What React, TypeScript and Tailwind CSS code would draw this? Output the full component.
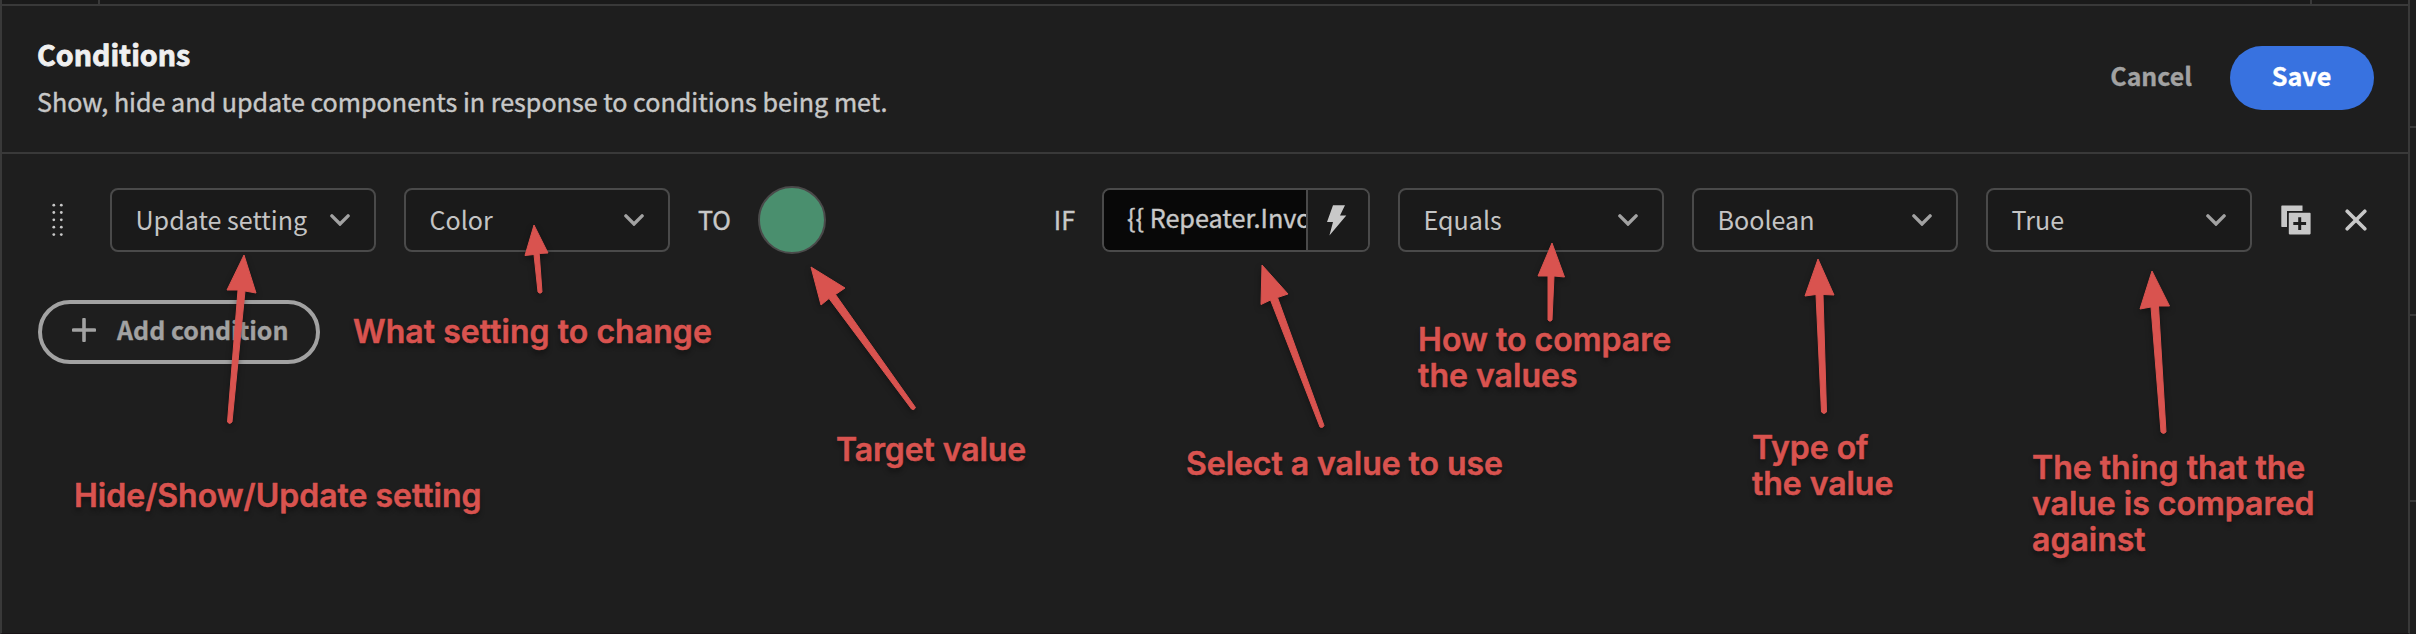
import React from "react";

const Chevron = () => (
  <svg width="20" height="12" viewBox="0 0 20 12" fill="none" className="mb-px shrink-0 text-[#a2a2a2]">
    <path d="M1.9 1.9 10 10 18.1 1.9" stroke="currentColor" strokeWidth="3.4" strokeLinecap="round" strokeLinejoin="miter" />
  </svg>
);

const Select = ({ label }: { label: string }) => (
  <button className="flex h-16 w-[266px] shrink-0 items-center justify-between rounded-lg border-2 border-[#4a4a4a] bg-[#1a1a1a] pr-6 pl-[23.5px]">
    <span className="pb-0.5 text-[25.1px] leading-8 text-[#c4c4c4]">{label}</span>
    <Chevron />
  </button>
);

const DragHandle = () => (
  <svg width="12" height="34" viewBox="0 0 12 34" className="shrink-0 fill-[#c8c8c8]">
    {[2.2, 9.5, 16.8, 24.2, 31.6].map((y) => (
      <g key={y}>
        <circle cx="1.8" cy={y} r="1.4" />
        <circle cx="9.3" cy={y} r="1.4" />
      </g>
    ))}
  </svg>
);

const BindingInput = () => (
  <div className="flex h-16 w-[268px] shrink-0 overflow-hidden rounded-lg border-2 border-[#4a4a4a]">
    <div className="flex w-[202px] items-center overflow-hidden bg-[#080808] pb-1.5 pl-[23px]">
      <span className="text-[25.2px] leading-8 whitespace-nowrap text-[#c8c8c8] [-webkit-text-stroke:0.4px]">
        {"{{ Repeater.Invo"}
      </span>
    </div>
    <div className="flex flex-1 items-center justify-center border-l-2 border-[#4a4a4a] bg-[#1a1a1a]">
      <svg width="20" height="31" viewBox="0 0 20 31" className="mr-[3px] fill-[#c8c8c8]">
        <path d="M6 .3H18L13 10.5H19.3L2.4 30.5 6 17H0Z" />
      </svg>
    </div>
  </div>
);

const DuplicateIcon = () => (
  <svg width="30" height="30" viewBox="0 0 30 30" className="shrink-0 fill-[#c8c8c8]">
    <path d="M1 .5H21.5V6H6V22H1A.8.8 0 0 1 .3 21V1.2A.8.8 0 0 1 1 .5Z" />
    <path
      fillRule="evenodd"
      d="M8.6 7.8H28.8A.8.8 0 0 1 29.6 8.6V28.6A.8.8 0 0 1 28.8 29.4H8.6A.8.8 0 0 1 7.8 28.6V8.6A.8.8 0 0 1 8.6 7.8ZM17.2 12.2V17.1H12.3V20.1H17.2V25H20.2V20.1H25.1V17.1H20.2V12.2Z"
    />
  </svg>
);

const CloseIcon = () => (
  <svg width="22" height="22" viewBox="0 0 22 22" fill="none" className="shrink-0 text-[#c8c8c8]">
    <path d="M2.2 2.2 19.8 19.8M19.8 2.2 2.2 19.8" stroke="currentColor" strokeWidth="3.6" strokeLinecap="round" />
  </svg>
);

const arrows = [
  "M244 255 256 293 245 291 232 422 Q229.500 425 227.500 422 L238 290 227 290Z",
  "M534 225 548 253 539.200 253.500 542 292 Q540 294.500 538 292 L534 254.500 525 255.500Z",
  "M811 267 845 288 835.500 294.500 915.500 407.500 Q914 411 911.500 409 L829 298.500 821 305Z",
  "M1262 265 1288 294 1277.500 297.500 1324 425.500 Q1323 428.500 1320 427 L1270.500 300 1261 304.500Z",
  "M1552 243 1564.500 277 1554 276 1552 320 Q1550 322.500 1548 320 L1548 276 1538 276Z",
  "M1818 259 1834 295 1823 294.500 1826.500 412 Q1824 415 1821.500 412 L1816 294.500 1805 296Z",
  "M2152 271 2169.500 306 2158.500 306 2166 432 Q2163.500 435 2161 432 L2151 307 2140 309Z",
];

const notes = [
  { lines: ["Hide/Show/Update setting"], at: "left-[74px] top-[478px]" },
  { lines: ["What setting to change"], at: "left-[353px] top-[314px] tracking-[0.05px]" },
  { lines: ["Target value"], at: "left-[836px] top-[432px] tracking-[-0.1px]" },
  { lines: ["Select a value to use"], at: "left-[1186px] top-[446px] tracking-[-0.05px]" },
  { lines: ["How to compare", "the values"], at: "left-[1418px] top-[322px] tracking-[0.03px]" },
  { lines: ["Type of", "the value"], at: "left-[1752px] top-[430px] tracking-[-0.05px]" },
  { lines: ["The thing that the", "value is compared", "against"], at: "left-[2032px] top-[450px]" },
];

const Annotations = () => (
  <div className="pointer-events-none absolute inset-0 text-[#d9534f]">
    <svg width="2416" height="634" viewBox="0 0 2416 634" className="fill-current stroke-current drop-shadow-[0_3px_3px_rgba(0,0,0,0.35)]">
      {arrows.map((d) => (
        <path key={d} d={d} strokeWidth="1" strokeLinejoin="round" />
      ))}
    </svg>
    {notes.map(({ lines, at }) => (
      <p
        key={lines[0]}
        className={`absolute font-['Inter',sans-serif] text-[32px] leading-9 font-semibold whitespace-nowrap [-webkit-text-stroke:0.5px] [text-shadow:0_4px_5px_rgba(0,0,0,0.4)] ${at}`}
      >
        {lines.map((line) => (
          <span key={line} className="block">
            {line}
          </span>
        ))}
      </p>
    ))}
  </div>
);

export default function App() {
  return (
    <div className="relative flex h-[634px] w-[2416px] overflow-hidden bg-[#1e1e1e] font-['Noto_Sans_CJK_SC',sans-serif]">
      <section className="flex w-[2410px] flex-col border-x-2 border-b border-x-[#393939] border-b-[#181316]">
        <div className="flex h-1 shrink-0 bg-[#1a1a1a]">
          <div className="w-[98px] border-r-2 border-[#393939]" />
          <div className="w-[2212px] border-r-2 border-[#393939]" />
        </div>
        <header className="flex h-[150px] shrink-0 items-center justify-between border-y-2 border-[#393939] pr-[34px] pl-[35px]">
          <div className="pb-1">
            <h1 className="text-[28.6px] leading-10 font-bold text-[#f0f0f0] [-webkit-text-stroke:0.8px]">Conditions</h1>
            <p className="mt-[7px] text-[25.1px] leading-10 text-[#c8c8c8] [-webkit-text-stroke:0.4px]">
              Show, hide and update components in response to conditions being met.
            </p>
          </div>
          <div className="flex items-center gap-[38px] pb-0.5 font-bold">
            <button className="pb-1.5 text-[24.9px] leading-8 text-[#a2a2a2] [-webkit-text-stroke:0.3px]">Cancel</button>
            <button className="h-16 w-36 rounded-full bg-[#3872e0] pr-px pb-1.5 text-[25.2px] leading-8 text-white [-webkit-text-stroke:0.3px]">
              Save
            </button>
          </div>
        </header>
        <main className="flex flex-col">
          <div className="mt-8 flex h-[68px] items-center justify-between pr-[41px] pl-[50px]">
            <div className="flex items-center">
              <DragHandle />
              <div className="ml-[46px] flex items-center gap-7">
                <Select label="Update setting" />
                <Select label="Color" />
                <span className="w-8 pb-0.5 text-[25.1px] leading-8 whitespace-nowrap text-[#c8c8c8] [-webkit-text-stroke:0.4px]">TO</span>
                <div className="size-[68px] rounded-full border-2 border-[#4a4a4a] bg-[#4a8f6e]" />
              </div>
            </div>
            <div className="flex items-center gap-7">
              <span className="-mr-px pb-0.5 text-[25.1px] leading-8 text-[#c8c8c8] [-webkit-text-stroke:0.4px]">IF</span>
              <BindingInput />
              <Select label="Equals" />
              <Select label="Boolean" />
              <Select label="True" />
              <div className="ml-px flex items-center gap-[34px]">
                <DuplicateIcon />
                <CloseIcon />
              </div>
            </div>
          </div>
          <button className="mt-[46px] ml-9 flex h-16 w-[282px] items-center rounded-full border-4 border-[#a2a2a2] pb-1 pl-[30px] font-bold text-[#a2a2a2]">
            <svg width="24" height="24" viewBox="0 0 24 24" fill="none">
              <path d="M12 1.500V22.500M1.500 12H22.500" stroke="currentColor" strokeWidth="3.6" strokeLinecap="round" />
            </svg>
            <span className="ml-[21px] pb-0.5 text-[25px] leading-8 whitespace-nowrap [-webkit-text-stroke:0.3px]">Add condition</span>
          </button>
        </main>
      </section>
      <aside className="flex flex-1 flex-col">
        <div className="h-32 border-b-2 border-[#393939]" />
        <div className="h-[188px] border-b-2 border-[#393939]" />
        <div className="h-[186px] border-b-2 border-[#393939]" />
      </aside>
      <Annotations />
    </div>
  );
}
